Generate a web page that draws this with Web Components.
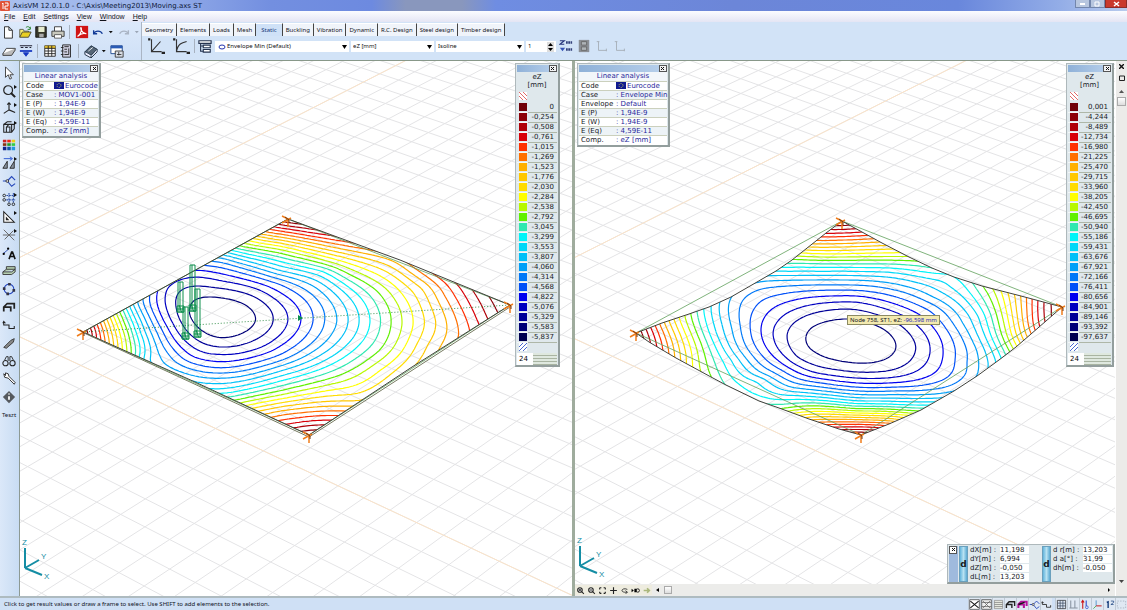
<!DOCTYPE html>
<html lang="en">
<head>
<meta charset="utf-8">
<title>AxisVM 12.0.1.0</title>
<style>
  html, body { height: 100%; margin: 0; }
  body { overflow: hidden; font-family: "Noto Sans", "Liberation Sans", sans-serif; font-size: 6px; color: #10131c; }
</style>
</head>
<body>
<vm-app></vm-app>

<script>
// shared look of everything clickable
const BUTTON = `
  button { all: unset; box-sizing: border-box; display: flex; align-items: center; justify-content: center; cursor: default; }
  svg { display: block; }
`

// all icons are drawn in a 16x16 box
const ICONS = {
  page: '<path d="M4 2h5l4 4v9H4zM9 2v4h4" fill="#fff" stroke="#222"/>',
  open: '<path d="M2 14V5h4l1 2h5v2" fill="#f8ef70" stroke="#554"/><path d="M2 14l3-6h10l-3 6z" fill="#e9cf22" stroke="#443"/><path d="M9 3c2-2 4-1 5 1m0-2v3h-3" fill="none" stroke="#171"/>',
  save: '<path d="M2 2h12v12H2z" fill="#37382c" stroke="#111"/><path d="M5 2h7v6H5z" fill="#e6ebcf"/><path d="M6 10h5v4H6z" fill="#aaa"/>',
  print: '<path d="M4 7V2h8v5" fill="#fff" stroke="#333"/><path d="M1 7h14v6H1z" fill="#c9c9bd" stroke="#333"/><path d="M4 11h8v4H4z" fill="#fff" stroke="#555"/>',
  pdf: '<path d="M1 1h14v14H1z" fill="#d01414"/><path d="M3 13c4-2 5-9 4-10s-1 6 6 7c-3-1-7 0-10 3z" fill="none" stroke="#fff" stroke-width="1.300"/>',
  undo: '<path d="M3 6v4h4M3 10c2-4 8-4 10 0" fill="none" stroke="#113a96" stroke-width="1.500"/>',
  redo: '<path d="M13 6v4H9M13 10c-2-4-8-4-10 0" fill="none" stroke="#aab4c4" stroke-width="1.500"/>',
  down: '<path d="M5 6h7l-3.500 4z" fill="#111"/>',
  downgrey: '<path d="M5 6h7l-3.500 4z" fill="#9aa5b5"/>',
  layers: '<path d="M1 11l4-6h10l-4 6z" fill="#fff" stroke="#333"/><path d="M1 11v2h10l4-6V5" fill="#bbb" stroke="#333"/>',
  level: '<path d="M1 2h14M2 4h3M7 4h3M12 4h2" stroke="#223" stroke-width="1.200"/><path d="M1 8h14" stroke="#1536c0" stroke-width="2"/><path d="M5 10l3 4 3-4z" fill="#1536c0" stroke="#1536c0"/>',
  table: '<path d="M2 2h12v12H2z" fill="#fff" stroke="#222"/><path d="M2 2h12v3H2z" fill="#ddb92c"/><path d="M2 5h12M2 8h12M2 11h12M6 2v12M10 2v12" stroke="#222"/>',
  report: '<path d="M3 1h9v14H3z" fill="#ccd" stroke="#222"/><path d="M5 3h5M5 6h3M5 9h3M5 12h5M10 5v7M1 4h3M1 8h3M1 12h3" stroke="#222"/>',
  book: '<path d="M1 9l7-7 7 4-7 7z" fill="#567" stroke="#123"/><path d="M1 9v3l7 4v-3M8 16l7-7V6" fill="#eef" stroke="#123"/><path d="M5 8l5-4" stroke="#fff"/>',
  dialog: '<path d="M1 2h13v9H1z" fill="#fff" stroke="#123f8a"/><path d="M1 2h13v3H1z" fill="#2a5bb5"/><path d="M6 8h9v7H6z" fill="#d9dde5" stroke="#333"/><path d="M8 12h5M10 9v4" stroke="#333"/>',
  chartline: '<path d="M4 2v11h9M4 13l8-9" fill="none" stroke="#333"/><path d="M1 2h2M13 14h3" stroke="#222" stroke-width="2"/>',
  chartcurve: '<path d="M4 2v11h9M4 13C5 6 9 5 13 4" fill="none" stroke="#333"/><path d="M1 2h2M13 14h3" stroke="#222" stroke-width="2"/>',
  list: '<path d="M1 2h14v3H1zM6 7h8v3H6zM6 12h8v3H6z" fill="#fff" stroke="#26344f" stroke-width="1.300"/><path d="M3 5v9h3M3 8h3" fill="none" stroke="#26344f" stroke-width="1.300"/>',
  minmax: '<path d="M1 2h5L1 6h5" fill="none" stroke="#26357c" stroke-width="1.300"/><path d="M8 4h7M8 12h7" stroke="#33407a" stroke-width="3" stroke-dasharray="2 .6"/><path d="M1 10h6l-3 4z" fill="#3452b5"/>',
  film: '<path d="M2 1h12v14H2z" fill="#8b8f95"/><path d="M5 3h6v4H5zM5 9h6v4H5z" fill="#aeb3b7" stroke="#666"/>',
  axisgrey: '<path d="M4 3v10h9M2 3h3M13 11v3" fill="none" stroke="#a4acb5"/>',
  arrow: '<path d="M4 1v12l3-3 2 5 2-1-2-4h4z" fill="#fff" stroke="#333"/>',
  zoom: '<circle cx="7" cy="7" r="5" fill="none" stroke="#222" stroke-width="1.400"/><path d="M10 10l5 5" stroke="#222" stroke-width="2.400"/>',
  axes: '<path d="M8 9V1M8 9l-6 4M8 9l7 3M6 3l2-2 2 2" fill="none" stroke="#222" stroke-width="1.300"/>',
  cube: '<path d="M2 5h9v9H2zM2 5l4-3h5M5 8l3-3h6v5l-3 4M5 8v6M5 8h4v6" fill="none" stroke="#222" stroke-width="1.200"/>',
  colours: '<path d="M1 2h4v3H1z" fill="#c22"/><path d="M6 2h4v3H6z" fill="#e21"/><path d="M11 2h4v3h-4z" fill="#ec1"/><path d="M1 6h4v3H1z" fill="#831"/><path d="M6 6h4v3H6z" fill="#292"/><path d="M11 6h4v3h-4z" fill="#3c4"/><path d="M1 10h4v4H1z" fill="#128"/><path d="M6 10h4v4H6z" fill="#15a"/><path d="M11 10h4v4h-4z" fill="#29d"/>',
  mirror: '<path d="M1 14l5-8v8zM9 14l5-8v8z" fill="#8a95a2" stroke="#222"/><path d="M2 3h9m-2-2l3 2-3 2" fill="none" stroke="#2450d0"/>',
  node: '<path d="M1 8h4M6 8l5-5 4 4M6 8l5 6 4-3" fill="none" stroke="#2547ba" stroke-width="1.300"/><circle cx="6" cy="8" r="1.500" fill="#fff" stroke="#222"/>',
  dots: '<path d="M5 4h10M5 9h10M8 1v11M13 1v11" stroke="#2c4ea8" stroke-dasharray="2 1" stroke-width="1.200"/><circle cx="2.500" cy="4" r="1.500" fill="none" stroke="#222"/><circle cx="2.500" cy="9" r="1.500" fill="none" stroke="#222"/><circle cx="8" cy="14" r="1.500" fill="none" stroke="#222"/><circle cx="13" cy="14" r="1.500" fill="none" stroke="#222"/>',
  ruler: '<path d="M2 2v12h12zM5 9v2h2z" fill="#fff" stroke="#222" stroke-width="1.200"/>',
  cross: '<path d="M2 2l12 12M13 3L3 13M1 8h14" stroke="#666" stroke-width="1.100"/>',
  label: '<path d="M1 9l6-5" stroke="#24a"/><circle cx="2" cy="9" r="1.300"/><circle cx="7" cy="3" r="1.300"/><path d="M8 15l3-8h1l3 8M9 12h5" fill="none" stroke="#111" stroke-width="1.800"/>',
  slabs: '<path d="M1 9l4-3h10l-4 3zM1 9v3h10l4-3V6M5 6V3h10v3" fill="#b6cfb1" stroke="#333"/>',
  hexagon: '<circle cx="8" cy="8" r="5.500" fill="none" stroke="#2547c0" stroke-width="1.300"/><path d="M7 1h3v3H7zM1 6h3v3H1zM12 8h3v3h-3zM5 12h3v3H5z" fill="#334"/>',
  frame: '<path d="M2 13V8l4-4h8v6M3 8h7v5" fill="none" stroke="#222" stroke-width="2"/>',
  path: '<path d="M2 4v4h6v4h6V9M1 6l1-2 2 2" fill="none" stroke="#222" stroke-width="1.200"/>',
  brush: '<path d="M2 13l8-8 4-2-1 4-8 7z" fill="#888" stroke="#333"/>',
  glasses: '<path d="M3 7l2-4h2v5M13 7l-2-4H9v5" fill="none" stroke="#222"/><circle cx="4" cy="10.500" r="3" fill="none" stroke="#222" stroke-width="1.200"/><circle cx="12" cy="10.500" r="3" fill="none" stroke="#222" stroke-width="1.200"/>',
  wrench: '<path d="M2 2l1 4 4 1 7 7 1-2-7-7-1-3-3-1v3H4z" fill="#fff" stroke="#222"/>',
  info: '<path d="M8 1l7 7-7 7-7-7z" fill="#55595e"/><path d="M8 7v4M8 4v1" stroke="#fff" stroke-width="2"/>',
  zoomin: '<circle cx="7" cy="7" r="4" fill="#fff" stroke="#222" stroke-width="2"/><path d="M10 10l4 4M5 7h4M7 5v4" stroke="#222" stroke-width="1.800"/>',
  zoomout: '<circle cx="7" cy="7" r="4" fill="#fff" stroke="#222" stroke-width="2"/><path d="M10 10l4 4M5 7h4" stroke="#222" stroke-width="1.800"/>',
  fit: '<path d="M3 3h3M3 3v3M13 3h-3M13 3v3M3 13h3M3 13v-3M13 13h-3M13 13v-3" stroke="#222" stroke-width="2"/>',
  pan: '<path d="M8 2v12M2 8h12" stroke="#222" stroke-width="2"/>',
  rotate: '<path d="M13 6c-8-4-14 4-5 5h5m-3-3l3 3-3 3" fill="none" stroke="#222" stroke-width="1.500"/>',
  camera: '<path d="M1 5l4 3-4 3zM6 5h4v6H6z"/><circle cx="12" cy="8" r="3" fill="none" stroke="#111" stroke-width="1.500"/>',
  eye: '<path d="M3 8h9m-3-4l4 4-4 4" fill="none" stroke="#aab77c" stroke-width="3"/>',
  xbox: '<path d="M1 1h14v14H1z" fill="#fff" stroke="#333"/><path d="M2 3l12 10M2 13L14 3" stroke="#111" stroke-width="1.500"/>',
  xgrid: '<path d="M1 1h14v14H1z" fill="#eee" stroke="#333"/><path d="M3 3l10 10M3 13L13 3M1 5h14M1 11h14" stroke="#555"/>',
  lines: '<path d="M2 2h12v12H2z" fill="#e5e8df" stroke="#888"/><path d="M2 5h12M2 8h12M2 11h12" stroke="#777"/>',
  pink: '<path d="M2 13V8l4-4h8v6M3 8h7v5" fill="none" stroke="#b3119b" stroke-width="3"/><path d="M2 8l9-3" stroke="#111" stroke-width="2"/>',
  mesh: '<path d="M2 2h12v12H2z" fill="#dde6f2" stroke="#222"/><path d="M2 6h12M2 10h12M6 2v12M10 2v12" stroke="#33415a"/>',
  columns: '<path d="M4 2v11M10 2v11M2 13h12" stroke="#8892a0" stroke-width="1.500"/>',
  load: '<path d="M4 14V3M2 5l2-3 2 3" stroke="#c11" fill="none" stroke-width="1.500"/><path d="M9 2v8" stroke="#24c" stroke-width="1.500"/><circle cx="10" cy="12" r="2" fill="none" stroke="#24c"/>',
  rgb: '<path d="M6 10V2" stroke="#27b"/><path d="M6 10l-4 4" stroke="#292"/><path d="M6 10h8" stroke="#c22" stroke-width="1.500"/>',
  square: '<path d="M4 5l2-1v9" fill="none" stroke="#123a7a" stroke-width="2"/><path d="M10 3h4v2l-4 3h4" fill="none" stroke="#123a7a"/>',
  dotted: '<path d="M2 3h12v10H2z" fill="none" stroke="#99a5b5" stroke-dasharray="2 2"/>',
}

function icon(name, size = 14) {
  return `<svg width="${size}" height="${size}" viewBox="0 0 16 16" aria-hidden="true">${ICONS[name]}</svg>`
}

// ---------- window chrome ----------

class VmTitlebar extends HTMLElement {
  constructor() {
    super()
    this.attachShadow({ mode: "open" })
    this.shadowRoot.innerHTML = `
    <style>
      ${BUTTON}
      :host { display: flex; align-items: center; height: 11px; gap: 3px; color: #0e1a3a;
        background: linear-gradient(90deg, #a9bfee 0, #9cb4ea 12%, #738fe0 24%, #6d8ae0 33%, #8997bd 36%, #8997bd 41%, #6f8de2 44%, #6c86d8 65%, #6987dc 85%, #93ade7 94%, #b8cbed 100%); }
      .logo { width: 10px; height: 10px; background: #e05338; border-radius: 1px; }
      h1 { flex: 1; margin: 0; font: 7px/10px "DejaVu Sans", sans-serif; white-space: nowrap; }
      .buttons { display: flex; align-self: flex-start; }
      button { width: 15px; height: 8px; background: #b7c6df; border: 1px solid #7386ac; border-top: 0; }
      button:last-child { width: 22px; background: #c9382b; border-color: #8d2c28; }
    </style>
    <svg class="logo" viewBox="0 0 10 10"><path d="M2 3l1-1v6M5 2h3v3H5v3h3" fill="none" stroke="#fff"/></svg>
    <h1><slot></slot></h1>
    <div class="buttons">
      <button aria-label="Minimize"><svg width="7" height="5"><path d="M1 3h5" stroke="#fff" stroke-width="2"/></svg></button>
      <button aria-label="Restore"><svg width="7" height="6"><path d="M1 1h4v4H1z" fill="none" stroke="#fff"/></svg></button>
      <button aria-label="Close window"><svg width="7" height="6"><path d="M1 1l5 4M6 1L1 5" stroke="#fff" stroke-width="1.500"/></svg></button>
    </div>`
  }
}
customElements.define("vm-titlebar", VmTitlebar)

class VmMenubar extends HTMLElement {
  constructor() {
    super()
    this.attachShadow({ mode: "open" })
    const items = ["File", "Edit", "Settings", "View", "Window", "Help"]
    this.shadowRoot.innerHTML = `
    <style>
      ${BUTTON}
      :host { display: flex; gap: 8px; height: 11px; padding: 0 4px; align-items: center; background: linear-gradient(#fbfcff, #e4e5f4); }
      button { font: 7px/9px "Liberation Sans", sans-serif; }
      span { display: block; }
      span::first-letter { text-decoration: underline; }
    </style>
    ${items.map((t) => `<button><span>${t}</span></button>`).join("")}`
  }
}
customElements.define("vm-menubar", VmMenubar)

class VmFileTools extends HTMLElement {
  constructor() {
    super()
    this.attachShadow({ mode: "open" })
    const button = (n) => n === "|" ? "<i></i>" : `<button class="${n.startsWith("down") ? "drop" : ""}" aria-label="${n}">${icon(n, n.startsWith("down") ? 12 : 14)}</button>`
    const row = (names) => `<div>${names.map(button).join("")}</div>`
    this.shadowRoot.innerHTML = `
    <style>
      ${BUTTON}
      :host { display: flex; flex-direction: column; width: 141px; background: linear-gradient(#dce9fb, #cfe0f6); border-right: 1px solid #aab5c4; }
      div { flex: 1; display: flex; align-items: center; }
      button { width: 17px; height: 17px; }
      .drop { width: 9px; }
      i { width: 1px; height: 14px; margin: 0 3px; background: #a7b2c0; }
    </style>
    ${row(["page", "open", "save", "print", "|", "pdf", "undo", "down", "redo", "downgrey"])}
    ${row(["layers", "level", "|", "table", "report", "|", "book", "down", "dialog"])}`
  }
}
customElements.define("vm-file-tools", VmFileTools)

class VmTabs extends HTMLElement {
  constructor() {
    super()
    this.attachShadow({ mode: "open" })
    const tabs = ["Geometry", "Elements", "Loads", "Mesh", "Static", "Buckling", "Vibration", "Dynamic", "R.C. Design", "Steel design", "Timber design"]
    this.shadowRoot.innerHTML = `
    <style>
      ${BUTTON}
      :host { display: flex; height: 13px; padding-top: 1px; align-items: stretch; }
      button { font: 6px/12px "Noto Sans", sans-serif; background: #f0f4fa; border-top: 1px solid #fff; border-right: 1px solid #444; padding: 0 3px; white-space: nowrap; }
      button[aria-selected=true] { background: #cfe1f7; color: #173a78; padding: 0 5px; }
    </style>
    ${tabs.map((t) => `<button role="tab" aria-selected="${t === "Static"}">${t}</button>`).join("")}`
    this.shadowRoot.host.role = "tablist"
  }
}
customElements.define("vm-tabs", VmTabs)

class VmResultBar extends HTMLElement {
  constructor() {
    super()
    this.attachShadow({ mode: "open" })
    this.shadowRoot.innerHTML = `
    <style>
      ${BUTTON}
      :host { display: flex; align-items: center; height: 20px; gap: 2px; padding-left: 2px; }
      button { width: 23px; height: 17px; }
      button.small { width: 16px; }
      i { width: 1px; height: 14px; background: #a7b2c0; }
      label { position: relative; display: flex; height: 11px; background: #fff; }
      label svg { position: absolute; right: 2px; top: 4px; pointer-events: none; }
      label svg.lens { left: 3px; right: auto; top: 3px; }
      label svg.spin { top: 1px; }
      select { appearance: none; border: 0; padding: 0 10px 0 2px; background: none; color: #111; font: 6px/11px "Noto Sans", sans-serif; width: 100%; outline: 0; }
      .case { width: 134px; } .case select { padding-left: 12px; }
      .comp { width: 83px; } .mode { width: 88px; }
      .scale { width: 30px; }
      input { border: 0; width: 20px; padding: 0 2px; background: none; font: 6px/11px "Noto Sans", sans-serif; color: #111; outline: 0; }
    </style>
    <button aria-label="linear">${icon("chartline", 18)}</button>
    <button aria-label="nonlinear">${icon("chartcurve", 18)}</button>
    <i></i>
    <button class="small" aria-label="cases">${icon("list")}</button>
    <label class="case"><svg class="lens" width="8" height="6"><ellipse cx="4" cy="3" rx="3" ry="2" fill="none" stroke="#2434b0" /></svg>
      <select aria-label="Load case"><option>Envelope Min (Default)</option></select>
      <svg width="5" height="4"><path d="M0 0h5L2.500 4z"/></svg></label>
    <label class="comp"><select aria-label="Component"><option>eZ [mm]</option></select><svg width="5" height="4"><path d="M0 0h5L2.500 4z"/></svg></label>
    <label class="mode"><select aria-label="Display mode"><option>Isoline</option></select><svg width="5" height="4"><path d="M0 0h5L2.500 4z"/></svg></label>
    <label class="scale"><input aria-label="Scale" value="1"><svg class="spin" width="7" height="10"><path d="M0 0h7v10H0z" fill="#ddd"/><path d="M1 4l2.500-3L6 4zM1 6l2.500 3L6 6z"/></svg></label>
    ${["minmax", "film", "axisgrey", "axisgrey"].map((n) => `<button class="small" aria-label="${n}">${icon(n)}</button>`).join("")}`
  }
}
customElements.define("vm-result-bar", VmResultBar)

class VmSideTools extends HTMLElement {
  constructor() {
    super()
    this.attachShadow({ mode: "open" })
    const names = ["arrow", "zoom", "axes", "cube", "colours", "mirror", "node", "dots", "ruler", "cross", "label", "slabs", "hexagon", "frame", "path", "brush", "glasses", "wrench", "info"]
    const more = ["zoom", "axes", "cube", "mirror", "dots", "ruler", "cross"]
    this.shadowRoot.innerHTML = `
    <style>
      ${BUTTON}
      :host { display: flex; flex-direction: column; width: 19px; padding-top: 3px; background: linear-gradient(90deg, #dbe8f9, #c8dcf3); border-right: 1px solid #8d9a94; }
      button { position: relative; width: 18px; height: 18px; }
      button.more::after { content: ""; position: absolute; right: 1px; top: 3px; border-left: 3px solid #111; border-top: 2px solid transparent; border-bottom: 2px solid transparent; }
      .text { font: 6px/18px "Noto Sans", sans-serif; }
    </style>
    ${names.map((n) => `<button class="${more.includes(n) ? "more" : ""}" aria-label="${n}">${icon(n)}</button>`).join("")}
    <button class="text">Teszt</button>`
  }
}
customElements.define("vm-side-tools", VmSideTools)

// ---------- floating windows ----------

const WINDOW = `
  ${BUTTON}
  :host { display: block; box-sizing: border-box; background: #dfe8ec; border: 1px solid #aeb8bb; border-right: 2px solid #939e9d; border-bottom: 2px solid #939e9d;
    font: 7px/9px "DejaVu Sans", sans-serif; color: #16181e; padding: 1px 1px 0; }
  .bar { display: flex; height: 7px; background: linear-gradient(90deg, #8fb1d8, #b9d1ec); }
  .bar button { margin-left: auto; width: 8px; height: 7px; background: #f4f5f6; border: 1px solid #555; }
`
const CLOSE = '<button aria-label="Close"><svg width="5" height="5"><path d="M1 1l3 3M4 1L1 4" stroke="#111"/></svg></button>'

class VmInfo extends HTMLElement {
  connectedCallback() {
    this.attachShadow({ mode: "open" })
    const rows = this.getAttribute("rows").split("|").map((r) => r.split("="))
    const flag = '<svg width="10" height="7" viewBox="0 0 10 7"><path d="M0 0h10v7H0z" fill="#101a90"/><circle cx="5" cy="3.500" r="2" fill="none" stroke="#b9b660" stroke-dasharray="1 1"/></svg>'
    this.shadowRoot.innerHTML = `
    <style>
      ${WINDOW}
      table { width: 100%; border-collapse: collapse; table-layout: fixed; }
      caption { height: 9px; color: #28289b; background: #f2f6fa; }
      th, td { padding: 0; height: 9px; line-height: 8px; box-sizing: border-box; text-align: left; font-weight: normal; white-space: nowrap; border-top: 1px solid #cbd0bd; }
      th { width: var(--label, 30px); padding-left: 2px; }
      td { color: #28289b; }
      tr:nth-child(odd) > * { background: #fff; }
      tr:nth-child(even) > * { background: #edf3f7; }
      td svg { display: inline-block; margin: 0 1px 0 0; vertical-align: -1px; }
    </style>
    <div class="bar">${CLOSE}</div>
    <table><caption>Linear analysis</caption>
      ${rows.map(([k, v]) => `<tr><th>${k}</th><td>${k === "Code" ? flag : ": "}${v}</td></tr>`).join("")}
    </table>`
  }
}
customElements.define("vm-info", VmInfo)

const COLOURS = ["#700008", "#8c0008", "#b00008", "#d80008", "#ff3000", "#ff7000", "#ffb000", "#ffc800", "#ffdc00", "#ffff00", "#b8f800", "#60f000",
  "#30e8b0", "#00f4f8", "#00d8f8", "#00c0f8", "#00a0f8", "#0078f8", "#0050f8", "#0000f0", "#0000c0", "#000098", "#000078", "#000050"]

class VmLegend extends HTMLElement {
  connectedCallback() {
    this.attachShadow({ mode: "open" })
    const values = this.getAttribute("values").split(" ")
    const hatch = (d, colour) => `<svg width="8" height="8"><path d="M0 0h8v8H0z" fill="#fff"/><path d="${d}" stroke="${colour}"/></svg>`
    this.shadowRoot.innerHTML = `
    <style>
      ${WINDOW}
      h2 { margin: 0; padding-top: 1px; font: 7px/8px "DejaVu Sans", sans-serif; text-align: center; height: 19px; }
      .hatch { height: 10px; padding: 0 2px; }
      table { width: 100%; border-collapse: collapse; }
      td { height: 10px; box-sizing: border-box; padding: 0 3px 0 0; line-height: 8px; text-align: right; border-bottom: 1px solid #aeb7a8; }
      td:first-child { width: 11px; padding: 0 0 0 2px; border-bottom-color: #f4f7f7; }
      td span { display: block; width: 8px; height: 8px; }
      footer { display: flex; height: 12px; background: repeating-linear-gradient(#dfe8df 0 2px, #a9b4a2 2px 3px); }
      input { width: 16px; box-sizing: border-box; border: 0; padding: 0 2px; background: #fff; font: 7px/12px "DejaVu Sans", sans-serif; outline: 0; }
    </style>
    <div class="bar">${CLOSE}</div>
    <h2>eZ<br>[mm]</h2>
    <div class="hatch">${hatch("M0 0l8 8M0 4l4 4M4 0l4 4", "#e06a6a")}</div>
    <table>${values.map((v, i) => `<tr><td><span style="background:${COLOURS[i]}"></span></td><td>${v}</td></tr>`).join("")}</table>
    <div class="hatch">${hatch("M0 8l8-8M0 4l4-4M4 8l4-4", "#4a6ad0")}</div>
    <footer><input aria-label="Number of levels" value="24"></footer>`
  }
}
customElements.define("vm-legend", VmLegend)

class VmCoords extends HTMLElement {
  constructor() {
    super()
    this.attachShadow({ mode: "open" })
    const table = (rows) => `<table>${rows.map(([k, v]) => `<tr><th>${k} :</th><td>${v}</td></tr>`).join("")}</table>`
    this.shadowRoot.innerHTML = `
    <style>
      ${WINDOW}
      :host { display: flex; }
      .grip { width: 9px; background: #9fbadd; }
      .grip button { width: 8px; height: 8px; background: #fff; border: 1px solid #555; }
      .d { width: 9px; margin: 0 1px; background: linear-gradient(90deg, #62b4dc, #b8e2f2 50%, #5aa9d2); font: bold 9px "DejaVu Sans", sans-serif; border: 1px solid #6aa0bd; }
      table { border-collapse: collapse; }
      .left { margin-right: 12px; }
      tr { height: 9px; }
      th, td { padding: 0; height: 9px; line-height: 8px; font-weight: normal; text-align: left; white-space: nowrap; }
      th { width: 27px; padding-right: 3px; padding-left: 1px; }
      td { width: 29px; background: #fff; border-bottom: 1px solid #dfe8ec; box-sizing: border-box; }
    </style>
    <div class="grip">${CLOSE}</div>
    <button class="d">d</button>
    <div class="left">${table([["dX[m]", "11,198"], ["dY[m]", "6,994"], ["dZ[m]", "-0,050"], ["dL[m]", "13,203"]])}</div>
    <button class="d">d</button>
    <div>${table([["d r[m]", "13,203"], ["d a[°]", "31,99"], ["dh[m]", "-0,050"]])}</div>`
  }
}
customElements.define("vm-coords", VmCoords)

// ---------- result views ----------

// samples are "x y level" triples on the screen plane, levels count legend rows from 0
const VIEWS = {
  moving: {
    origin: [20, 61],
    corners: [[83, 332], [309, 435], [510, 305], [288, 219]],
    outline: "83 332 288 219 400 260 510 305 412 367 309 435 195 382",
    samples: `83 332 0  288 219 0  510 305 0  309 435 0
      222 318 22.700  189 315 22  213 297 22  256 320 22  220 338 22  244 304 22  243 333 22
      177 310 21  207 287 21  273 320 21  220 347 21  185 329 21  247 294 21  252 341 21
      288 320 20  220 354 20  187 278 20  220 281 20  168 287 20  173 323 20  193 347 20  177 283 20.2  255 288 20  262 347 20
      198 270 19  301 319 19  220 362 19  157 294 19  163 320 19  193 357 19  280 293 19  280 346 19
      208 266 18  313 322 18  220 368 18  150 297 18  157 320 18  167 340 18  200 365 18  280 284 18  280 355 18
      218 262 17  324 322 17  143 300 17  157 332 17  220 373 17
      223 258 16  337 322 16  137 303 16  151 332 16  163 357 16  220 378 16
      348 322 15  142 332 14.500  147 361 15  177 374 15.400  280 271 15  280 371 15
      220 389 14  370 322 13  323 271 13  357 294 13  357 347 13  280 381 13
      132 332 12  391 322 11  128 332 11  243 247 11  280 253 11  323 264 11  350 275 11  377 291 11  380 350 11  347 372 11  313 383 11  280 391 11
      132 353 11  237 400 11  120 312 11
      413 325 9  252 241 9  280 246 9  330 258 9  380 276 9  403 296 9  403 350 9  380 370 9  330 390 9  280 399 9  247 405 9
      436 322 7  260 237 7  280 240 7  347 254 7  397 270 7  423 289 7  427 345 7  360 401 7  280 407 7  260 411 7
      459 335 5  415 269 5  445 297 5  267 232 5  280 234 5  347 246 5  280 415 5  273 417 5  103 332 5  393 259 5.700  350 409 5.400
      469 328 4  436 276 4  479 324 3  457 284 3  96 332 3  275 227 3  320 234 3  290 424 3  487 318 2  473 291 2  497 312 1  489 297 1  88 332 1  331 420 3`,
  },
  envelope: {
    origin: [576, 61],
    corners: [[637, 333], [862, 435], [1063, 307], [843, 221]],
    outline: "637 333 663 323 690 314 710 307 732 297 758 282 777 271 793 260 827 233 843 221 883 243 910 257 933 268 955 277 983 286 1022 296 1063 307 1047 321 1017 347 1000 360 978 376 955 391 922 410 890 424 862 435 840 429 810 419 780 408 760 401 727 385 712 377 677 358 650 342",
    samples: `637 333 0  843 221 0  1063 307 0  862 435 0
      853 341 22.700  807 337 22  853 319 22  857 363 22  897 345 22  813 327 22  830 321 22  817 352 22  837 360 22  883 328 22  890 357 22
      788 337 21  847 309 21  857 372 21  917 347 21  797 357 21  905 328 21
      774 333 20  857 302 20  857 378 20  931 350 20  780 320 20  800 308 20  787 357 20  817 373 20  883 308 20  917 325 20  923 367 20  890 378 20
      762 327 19  840 296 19  857 383 19  944 353 19
      751 323 18  843 290 18  857 387 18  956 357 18  757 307 18  780 295 18  757 347 18  783 370 18  823 383 18  890 295 18  930 310 18  950 333 18  907 387 18
      740 317 17  843 285 17  857 391 17  967 363 17
      732 297 16  733 327 16  740 350 16  760 373 16  793 388 16  758 282 16  800 280 16  843 280 16  890 283 16  933 297 16  963 323 16  978 350 16  978 376 16  857 394 16  900 394 16  955 391 16
      989 367 15  712 307 14  717 333 14  733 360 14  760 380 14  797 395 14  777 271 14  843 271 14  890 272 14  950 287 14  980 317 14  997 361 14  857 401 14  900 402 14  937 402 14
      950 275 13.300  843 264 12  788 264 12  925 408 12  937 269 12  975 284 12  725 384 12  767 404 12  745 394 12.600  857 406 12
      692 314 11  702 343 11  713 378 11  795 259 11  843 260 11  918 261 11  983 286 11  997 313 11  1010 350 11  917 411 11  857 409 11  782 409 11
      680 318 9  693 368 9  803 253 9  843 254 9  890 253 9  1002 290 9  1010 323 9  1017 345 9  905 415 9  857 413 9  797 413 9
      843 247 7  1015 294 7  682 362 7  809 417 7  857 417 7  897 419 7
      665 322 6  813 244 6  1022 296 6  1028 337 6
      843 240 5  670 355 5  857 422 5  825 422 5  889 423 5
      656 325 4  1033 299 4  658 347 3  1040 326 3  843 233 3  857 427 3  839 427 3  1039 301 3
      647 329 2  645 339 1  1052 315 1  1051 304 1  843 226 1  860 432 1`,
  },
}

// maps the unit square onto the four projected corners
function projector([a, b, c, d]) {
  const sx = a[0] - b[0] + c[0] - d[0], sy = a[1] - b[1] + c[1] - d[1]
  const dx1 = b[0] - c[0], dy1 = b[1] - c[1], dx2 = d[0] - c[0], dy2 = d[1] - c[1]
  const den = dx1 * dy2 - dx2 * dy1
  const g = (sx * dy2 - dx2 * sy) / den, h = (dx1 * sy - sx * dy1) / den
  return (u, v) => {
    const w = g * u + h * v + 1
    return [0, 1].map((i) => (((b[i] - a[i] + g * b[i]) * u + (d[i] - a[i] + h * d[i]) * v + a[i]) / w).toFixed(1)).join(" ")
  }
}

// smoothed thin plate spline through the samples
function surface(samples) {
  const kernel = (x1, y1, x2, y2) => {
    const r = (x1 - x2) ** 2 + (y1 - y2) ** 2
    return r ? r * Math.log(r) : 0
  }
  const pts = samples.map(([x, y, z]) => [x / 100, y / 60, z])
  const n = pts.length, size = n + 3
  const m = Array.from({ length: size }, () => new Float64Array(size + 1))
  pts.forEach(([x, y, z], i) => {
    pts.forEach(([px, py], j) => { m[i][j] = kernel(x, y, px, py) })
    m[i][i] += 0.04
    ;[1, x, y].forEach((t, k) => { m[i][n + k] = t; m[n + k][i] = t })
    m[i][size] = z
  })
  for (let c = 0; c < size; c++) {
    let p = c
    for (let r = c + 1; r < size; r++) if (Math.abs(m[r][c]) > Math.abs(m[p][c])) p = r
    ;[m[c], m[p]] = [m[p], m[c]]
    for (let r = 0; r < size; r++) {
      if (r === c) continue
      const f = m[r][c] / m[c][c]
      for (let k = c; k <= size; k++) m[r][k] -= f * m[c][k]
    }
  }
  const w = m.map((row, i) => row[size] / row[i])
  return (x, y) => {
    x /= 100; y /= 60
    let z = w[n] + w[n + 1] * x + w[n + 2] * y
    for (let i = 0; i < n; i++) z += w[i] * kernel(x, y, pts[i][0], pts[i][1])
    return z
  }
}

// marching squares, one path string per level
function isolines(field, x0, y0, x1, y1, step) {
  const paths = COLOURS.map(() => "")
  const cols = Math.ceil((x1 - x0) / step) + 1
  let prev = null
  for (let y = y0; y <= y1 + step; y += step) {
    const row = Array.from({ length: cols }, (_, i) => field(x0 + i * step, y))
    for (let i = 0; prev && i < cols - 1; i++) {
      const x = x0 + i * step
      const q = [[x, y - step, prev[i]], [x + step, y - step, prev[i + 1]], [x + step, y, row[i + 1]], [x, y, row[i]]]
      const zs = q.map((p) => p[2])
      for (let l = Math.max(1, Math.ceil(Math.min(...zs))); l <= Math.min(22, Math.max(...zs)); l++) {
        const hits = []
        q.forEach((p, k) => {
          const r = q[(k + 1) % 4]
          if ((p[2] < l) !== (r[2] < l)) {
            const t = (l - p[2]) / (r[2] - p[2])
            hits.push(`${(p[0] + t * (r[0] - p[0])).toFixed(1)} ${(p[1] + t * (r[1] - p[1])).toFixed(1)}`)
          }
        })
        for (let k = 0; k + 1 < hits.length; k += 2) paths[l] += `M${hits[k]}L${hits[k + 1]}`
      }
    }
    prev = row
  }
  return paths
}

class VmView extends HTMLElement {
  connectedCallback() {
    this.attachShadow({ mode: "open" })
    const name = this.getAttribute("result")
    const view = VIEWS[name]
    this.shadowRoot.innerHTML = `
    <style>
      :host { display: block; position: relative; overflow: hidden; background: #fff; }
      .scene { display: block; width: 100%; height: 100%; }
      .axes { position: absolute; left: 1px; bottom: var(--axes-bottom, 7px); overflow: visible; }
      text { font: 8px "Liberation Sans", sans-serif; fill: #148da4; }
      ::slotted(*) { position: absolute; }
    </style>
    <svg class="scene"><g transform="translate(${-view.origin[0]} ${-view.origin[1]})">
      ${this._grid(view)}${this._slab(view, name)}${name === "moving" ? this._loads() : ""}${view.corners.map((c) => this._support(c)).join("")}
    </g></svg>
    <svg class="axes" width="32" height="46"><path d="M4 35V15M4 35l14-8M4 35l17 7" fill="none" stroke="#148da4" stroke-width="2"/>
      <text x="1" y="12">Z</text><text x="20" y="26">Y</text><text x="23" y="46">X</text></svg>
    <slot></slot>`
  }

  _grid(view) {
    const at = projector(view.corners)
    let lines = ""
    for (let i = -35; i <= 45; i++) {
      const t = i / 10 + 0.05
      lines += `M${at(t, -4)}L${at(t, 4)}M${at(-4, t)}L${at(4, t)}`
    }
    const axis = `M${at(-0.55, -4)}L${at(-0.55, 4)}M${at(-4, -0.15)}L${at(4, -0.15)}`
    return `<path d="${lines}" stroke="#e4e4e6" stroke-width="1"/><path d="${axis}" stroke="#fbe3c8"/>`
  }

  _slab(view, name) {
    const field = surface(view.samples.trim().split(/\s{2,}|\n/).map((s) => s.trim().split(" ").map(Number)))
    const xs = view.corners.map((c) => c[0]), ys = view.corners.map((c) => c[1])
    const paths = isolines(field, Math.min(...xs), Math.min(...ys), Math.max(...xs), Math.max(...ys), 2)
    const quad = view.corners.map((c) => c.join(" ")).join(" ")
    return `<clipPath id="slab"><polygon points="${view.outline}"/></clipPath>
      <g clip-path="url(#slab)" fill="none" stroke-width="1.200">${paths.map((d, i) => `<path d="${d}" stroke="${COLOURS[i]}"/>`).join("")}</g>
      <polygon points="${quad}" fill="none" stroke="#5fa05a" stroke-width=".8"/>
      <polygon points="${view.outline}" fill="none" stroke="#40423c"/>
      ${name === "moving" ? '<path d="M84 333L309 437 510 307" fill="none" stroke="#777b62"/>' : ""}`
  }

  _support([x, y]) {
    return `<path d="M${x} ${y}v8M${x + 3} ${y - 1}l-9 5M${x - 6} ${y - 3}l6 3" fill="none" stroke="#ef7d1c" stroke-width="1.500"/><path d="M${x - 3} ${y - 2}l4 3v3" fill="none" stroke="#6d3510"/>`
  }

  // the vehicle: four wheel loads on the dotted path
  _loads() {
    const wheel = (x, y, h) => `M${x} ${y}v${h}M${x + 2} ${y}v${h}M${x + 5} ${y}v${h}M${x} ${y}h5M${x - 1} ${y + h - 7}h7v6h-7zM${x - 1} ${y + h - 4}h7M${x + 1} ${y + h - 8}l3 8`
    return `<path d="M83 332L510 305" stroke="#3b9350" stroke-dasharray="1 2"/>
      <path d="${wheel(178, 282, 31)}${wheel(190, 265, 47)}${wheel(183, 307, 33)}${wheel(195, 289, 49)}" fill="none" stroke="#0c8f4c"/>
      <path d="M298 315l5 3-5 3z" fill="#0c8f4c"/>`
  }
}
customElements.define("vm-view", VmView)

// ---------- scroll and status bars ----------

class VmViewBar extends HTMLElement {
  constructor() {
    super()
    this.attachShadow({ mode: "open" })
    const names = ["zoomin", "zoomout", "fit", "pan", "rotate", "camera", "eye"]
    this.shadowRoot.innerHTML = `
    <style>
      ${BUTTON}
      :host { display: flex; align-items: center; height: 12px; background: #ececea; }
      button { width: 11px; height: 10px; background: #eeecdf; }
      .track { flex: 1; display: flex; align-items: center; gap: 4px; padding: 0 4px; }
      .thumb { width: 8px; height: 8px; border: 1px solid #aaa; background: linear-gradient(#fff, #ddd); box-sizing: border-box; }
      .end { margin-left: auto; }
    </style>
    ${names.map((n) => `<button aria-label="${n}">${icon(n, 9)}</button>`).join("")}
    <div class="track"><svg width="4" height="4"><path d="M3 0v4L0 2z"/></svg><div class="thumb"></div><svg class="end" width="4" height="4"><path d="M1 0v4l2-2z"/></svg></div>`
  }
}
customElements.define("vm-view-bar", VmViewBar)

class VmRail extends HTMLElement {
  constructor() {
    super()
    this.attachShadow({ mode: "open" })
    this.shadowRoot.innerHTML = `
    <style>
      ${BUTTON}
      :host { display: flex; flex-direction: column; align-items: center; width: 11px; background: #ecebe9; border-left: 1px solid #fff; }
      button { width: 11px; height: 11px; }
      .thumb { width: 9px; height: 9px; box-sizing: border-box; border: 1px solid #aaa; background: linear-gradient(#fff, #ddd); }
      .up { margin: 7px 0 4px; }
      .down { margin-top: auto; padding-bottom: 13px; }
    </style>
    <button aria-label="Close view"><svg width="5" height="5"><path d="M0 0l5 5M5 0L0 5" stroke="#111" stroke-width="1.400"/></svg></button>
    <button aria-label="Maximize view"><svg width="6" height="6"><path d="M.5 1h5v4.500h-5z" fill="none" stroke="#222"/></svg></button>
    <svg class="up" width="5" height="3"><path d="M0 3h5L2.500 0z" fill="#555"/></svg>
    <div class="thumb"></div>
    <svg class="down" width="5" height="3"><path d="M0 0h5L2.500 3z" fill="#444"/></svg>`
  }
}
customElements.define("vm-rail", VmRail)

class VmStatus extends HTMLElement {
  constructor() {
    super()
    this.attachShadow({ mode: "open" })
    const names = ["xbox", "xgrid", "lines", "frame", "pink", "node", "path", "mesh", "columns", "load", "rgb", "square", "dotted"]
    this.shadowRoot.innerHTML = `
    <style>
      ${BUTTON}
      :host { display: flex; align-items: center; justify-content: space-between; height: 12px; padding-left: 4px; background: #cfe0f5; border-top: 2px solid #aebbc0; font: 6px/10px "Noto Sans", sans-serif; }
      div { display: flex; }
      button { width: 12px; height: 12px; border-left: 1px solid #c0cad5; background: #dfe8f3; }
      button:nth-child(7) { margin-right: 3px; }
    </style>
    <slot></slot>
    <div>${names.map((n) => `<button aria-label="${n}">${icon(n, 11)}</button>`).join("")}</div>`
  }
}
customElements.define("vm-status", VmStatus)

class VmApp extends HTMLElement {
  constructor() {
    super()
    this.attachShadow({ mode: "open" })
    this.shadowRoot.innerHTML = `
    <style>
      :host { display: flex; flex-direction: column; height: 100vh; }
      .tools { display: flex; height: 38px; border-bottom: 1px solid #889889; background: #d2e3f7; }
      .work { display: flex; flex-direction: column; }
      .main { flex: 1; display: flex; min-height: 0; }
      .left, .right { min-width: 0; display: flex; flex-direction: column; }
      .left { flex: 553; border-right: 3px solid #9fac9d; box-sizing: border-box; --axes-bottom: 17px; }
      .right { flex: 541; }
      vm-view { flex: 1; min-height: 0; }
      .info { left: 2px; top: 2px; width: 79px; --label: 30px; }
      .info.wide { width: 93px; --label: 37px; }
      vm-legend { right: 12px; top: 2px; width: 45px; }
      .right vm-legend { right: 1px; width: 48px; }
      vm-coords { right: 0; bottom: 0; }
      .tip { left: 272px; top: 254px; padding: 0 2px; border: 1px solid #8c8a62; background: #f3eab0; font-size: 6px; line-height: 8px; white-space: nowrap; }
      .tip b { font-weight: normal; color: #2b2bb5; }
    </style>
    <vm-titlebar>AxisVM 12.0.1.0 - C:\\Axis\\Meeting2013\\Moving.axs ST</vm-titlebar>
    <vm-menubar></vm-menubar>
    <div class="tools">
      <vm-file-tools></vm-file-tools>
      <div class="work"><vm-tabs></vm-tabs><vm-result-bar></vm-result-bar></div>
    </div>
    <div class="main">
      <vm-side-tools></vm-side-tools>
      <div class="left">
        <vm-view result="moving">
          <vm-info class="info" rows="Code=Eurocode|Case=MOV1-001|E (P)=1,94E-9|E (W)=1,94E-9|E (Eq)=4,59E-11|Comp.=eZ [mm]"></vm-info>
          <vm-legend values="0 -0,254 -0,508 -0,761 -1,015 -1,269 -1,523 -1,776 -2,030 -2,284 -2,538 -2,792 -3,045 -3,299 -3,553 -3,807 -4,060 -4,314 -4,568 -4,822 -5,076 -5,329 -5,583 -5,837"></vm-legend>
        </vm-view>
      </div>
      <div class="right">
        <vm-view result="envelope">
          <vm-info class="info wide" rows="Code=Eurocode|Case=Envelope Min|Envelope=Default|E (P)=1,94E-9|E (W)=1,94E-9|E (Eq)=4,59E-11|Comp.=eZ [mm]"></vm-info>
          <vm-legend values="0,001 -4,244 -8,489 -12,734 -16,980 -21,225 -25,470 -29,715 -33,960 -38,205 -42,450 -46,695 -50,940 -55,186 -59,431 -63,676 -67,921 -72,166 -76,411 -80,656 -84,901 -89,146 -93,392 -97,637"></vm-legend>
          <div class="tip">Node 758, ST1, eZ: <b>-96,598 mm</b></div>
          <vm-coords></vm-coords>
        </vm-view>
        <vm-view-bar></vm-view-bar>
      </div>
      <vm-rail></vm-rail>
    </div>
    <vm-status>Click to get result values or draw a frame to select. Use SHIFT to add elements to the selection.</vm-status>`
  }
}
customElements.define("vm-app", VmApp)
</script>
</body>
</html>
